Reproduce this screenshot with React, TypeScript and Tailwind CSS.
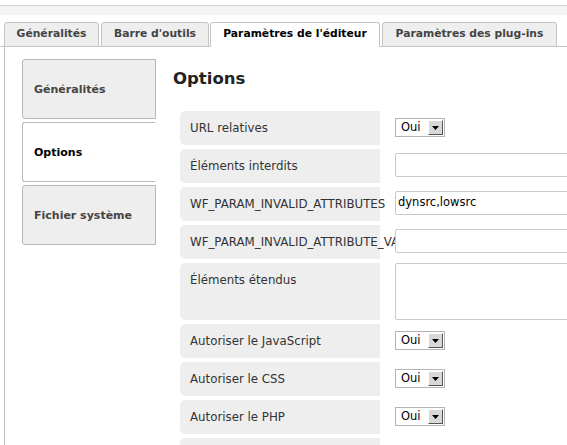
import React from 'react';

type Row = {
  label: string;
  kind: 'select' | 'text' | 'textarea';
  value?: string;
};

const topTabs = [
  { label: 'Généralités', width: 'w-[95px]', gap: 'ml-0' },
  { label: "Barre d'outils", width: 'w-[108px]', gap: 'ml-[2px]' },
  { label: "Paramètres de l'éditeur", width: 'w-[170px]', gap: 'ml-[1px]', active: true },
  { label: 'Paramètres des plug-ins', width: 'w-[175px]', gap: 'ml-[2px]' },
];

const sideTabs = [
  { label: 'Généralités' },
  { label: 'Options', active: true },
  { label: 'Fichier système' },
];

// last row only peeks in at the bottom edge, so it carries no label
const rows: Row[] = [
  { label: 'URL relatives', kind: 'select', value: 'Oui' },
  { label: 'Éléments interdits', kind: 'text' },
  { label: 'WF_PARAM_INVALID_ATTRIBUTES', kind: 'text', value: 'dynsrc,lowsrc' },
  { label: 'WF_PARAM_INVALID_ATTRIBUTE_VALUES', kind: 'text' },
  { label: 'Éléments étendus', kind: 'textarea' },
  { label: 'Autoriser le JavaScript', kind: 'select', value: 'Oui' },
  { label: 'Autoriser le CSS', kind: 'select', value: 'Oui' },
  { label: 'Autoriser le PHP', kind: 'select', value: 'Oui' },
  { label: '', kind: 'select', value: '' },
];

function SelectBox({ value }: { value: string }) {
  return (
    <div className="mt-[7px] flex h-[19px] w-[50px] items-center border border-[#b5b5b5] bg-white">
      <span className="flex-1 pl-[5px] text-[11.5px] leading-none text-black">{value}</span>
      <div className="mr-[1px] flex h-[15px] w-[15px] items-center justify-center border-t border-l border-t-white border-l-white border-r border-b border-r-[#555] border-b-[#555] bg-[#d8d8d8]">
        <svg width="7" height="4" viewBox="0 0 7 4">
          <path d="M0 0h7L3.5 4z" fill="#000" />
        </svg>
      </div>
    </div>
  );
}

function Control({ row }: { row: Row }) {
  if (row.kind === 'select') return <SelectBox value={row.value ?? ''} />;
  if (row.kind === 'textarea') {
    return <div className="h-[57px] w-[200px] rounded-[2px] border border-[#c8c8c8] bg-white" />;
  }
  return (
    <div className="mt-[4px] flex h-[24px] w-[200px] items-center rounded-[2px] border border-[#c8c8c8] bg-white pl-[2px] text-[11.5px] text-black">
      {row.value}
    </div>
  );
}

export default function App() {
  return (
    <div className="h-[445px] w-[567px] overflow-hidden bg-white font-['DejaVu_Sans',Verdana,sans-serif] text-[#333]">
      {/* toolbar strip */}
      <div className="mt-[5px] h-[10px] border-t border-[#d4d4d4] bg-[#f4f4f4]" />

      {/* top tabs */}
      <div className="mt-[7px] flex items-end border-b border-[#c4c4c4] pl-[4px]">
        {topTabs.map((tab) => (
          <div
            key={tab.label}
            className={`${tab.width} ${tab.gap} -mb-px flex h-[25px] items-center justify-center rounded-t-[3px] border border-[#c4c4c4] text-[10.75px] font-bold ${
              tab.active ? 'border-b-white bg-white text-black' : 'bg-[#eeeeee] text-[#444]'
            }`}
          >
            {tab.label}
          </div>
        ))}
      </div>

      <div className="ml-[4px] flex h-[400px] border-l border-[#c4c4c4]">
        {/* side tabs */}
        <div className="flex w-[151px] flex-col gap-[3px] pt-[12px] pl-[17px]">
          {sideTabs.map((tab) => (
            <div
              key={tab.label}
              className={`flex h-[60px] w-[134px] items-center rounded-l-[3px] border border-[#b8b8b8] pt-[3px] pl-[11px] text-[11px] font-bold ${
                tab.active ? 'border-r-white bg-white text-black' : 'bg-[#eeeeee] text-[#444]'
              }`}
            >
              {tab.label}
            </div>
          ))}
        </div>

        {/* options panel */}
        <div className="flex-1 pl-[17px]">
          <h2 className="mt-[22px] text-[16.5px] font-bold leading-[20px] text-[#222]">Options</h2>
          <div className="mt-[22px] flex flex-col gap-[4px] pl-[7px]">
            {rows.map((row, i) => (
              <div key={i} className="flex">
                <div
                  className={`w-[200px] shrink-0 rounded-l-[5px] bg-[#eeeeee] pt-[11px] pl-[10px] text-[11.8px] leading-[13px] whitespace-nowrap ${
                    row.kind === 'textarea' ? 'h-[57px]' : 'h-[34px]'
                  }`}
                >
                  {row.label}
                </div>
                <div className="relative z-10 ml-[15px] bg-white">
                  <Control row={row} />
                </div>
              </div>
            ))}
          </div>
        </div>
      </div>
    </div>
  );
}
